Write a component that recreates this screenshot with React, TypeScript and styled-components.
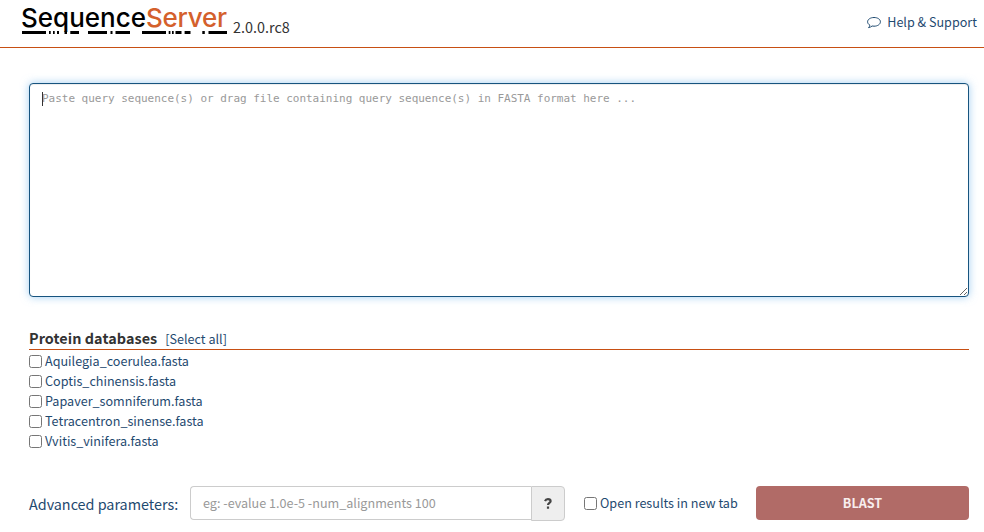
import React from "react";
import styled, { createGlobalStyle } from "styled-components";

const sans = `"Noto Sans CJK SC", "Open Sans", sans-serif`;

const GlobalStyle = createGlobalStyle`
  *, *::before, *::after { box-sizing: border-box; }
  body {
    margin: 0;
    background: #fff;
    color: #333;
    font-family: ${sans};
    overflow: hidden;
  }
`;

const Header = styled.header`
  display: flex;
  justify-content: space-between;
  height: 48px;
  padding: 0 7px 0 22px;
  border-bottom: 1px solid #c74f13;
`;

const Brand = styled.div`
  display: flex;
  gap: 6px;
`;

const Logo = styled.svg`
  display: block;
  width: 205px;
  height: 36px;
  overflow: visible;
  font: 500 26px Inter, sans-serif;
`;

const Version = styled.span`
  margin-top: 16px;
  font-size: 14.4px;
  line-height: 22px;
  white-space: nowrap;
`;

const HelpLink = styled.a`
  display: flex;
  align-items: center;
  gap: 6px;
  height: 22px;
  margin-top: 11px;
  color: #1f4a70;
  font-size: 12.6px;
  line-height: 22px;
  white-space: nowrap;
`;

const Form = styled.form`
  padding: 35px 15px 0 29px;
`;

const QueryBox = styled.div`
  position: relative;
`;

const Caret = styled.span`
  position: absolute;
  top: 9px;
  left: 13px;
  width: 1px;
  height: 14px;
  background: #333;
`;

const QueryInput = styled.textarea`
  display: block;
  width: 940px;
  height: 214px;
  padding: 6px 12px;
  border: 1px solid #17547f;
  border-radius: 4px;
  outline: 0;
  box-shadow: inset 0 1px 1px rgba(0, 0, 0, 0.075), 0 0 8px rgba(102, 175, 233, 0.6);
  color: #333;
  caret-color: transparent;
  font: 11px/17px "DejaVu Sans Mono", monospace;
  letter-spacing: -0.022px;
  resize: vertical;
  &::placeholder { color: #999; opacity: 1; }
`;

const Databases = styled.section`
  margin-top: 31px;
`;

const DatabasesHeader = styled.div`
  display: flex;
  align-items: flex-start;
  gap: 8px;
  height: 22px;
  border-bottom: 1px solid #c74f13;
`;

const Heading = styled.h4`
  margin: 0;
  font-size: 14.4px;
  font-weight: 700;
  letter-spacing: 0.06px;
  line-height: 20px;
  white-space: nowrap;
`;

const SelectAll = styled.button`
  padding: 0;
  border: 0;
  background: none;
  color: #1f4a70;
  font: 12.6px/21px ${sans};
  white-space: nowrap;
`;

const DatabaseList = styled.div`
  display: flex;
  flex-direction: column;
  padding-top: 1px;
`;

const CheckLabel = styled.label`
  display: flex;
  align-items: center;
  gap: 3px;
  height: 20px;
  color: #1f4a70;
  font-size: 12.6px;
  line-height: 20px;
  white-space: nowrap;
`;

const Checkbox = styled.input`
  width: 13px;
  height: 13px;
  margin: 0;
`;

const Controls = styled.div`
  display: flex;
  align-items: flex-start;
  height: 36px;
  margin-top: 35px;
`;

const ParamsLabel = styled.label`
  width: 161px;
  padding-top: 7px;
  color: #1f4a70;
  font-size: 14.4px;
  letter-spacing: -0.02px;
  line-height: 22px;
  white-space: nowrap;
`;

const ParamsGroup = styled.div`
  display: flex;
  width: 375px;
  margin-right: 19px;
`;

const ParamsInput = styled.input`
  width: 341px;
  height: 34px;
  padding: 5px 12px 7px;
  border: 1px solid #ccc;
  border-right: 0;
  border-radius: 4px 0 0 4px;
  font: 12.6px/20px ${sans};
  &::placeholder { color: #999; opacity: 1; }
`;

const HelpButton = styled.button`
  width: 34px;
  height: 35px;
  padding: 0;
  border: 1px solid #ccc;
  border-radius: 0 4px 4px 0;
  background: #eee;
  display: grid;
  place-items: center;
`;

const NewTab = styled.div`
  width: 172px;
  padding-top: 7px;
`;

const SubmitButton = styled.button`
  width: 213px;
  height: 34px;
  padding: 0;
  border: 0;
  border-radius: 4px;
  background: #b16b67;
  color: #f8eeee;
  font: 700 12.6px/20px ${sans};
`;

const databases = [
  "Aquilegia_coerulea.fasta",
  "Coptis_chinensis.fasta",
  "Papaver_somniferum.fasta",
  "Tetracentron_sinense.fasta",
  "Vvitis_vinifera.fasta",
];

export default function App() {
  return (
    <>
      <GlobalStyle />
      <Header>
        <Brand>
          <Logo viewBox="0 0 205 36">
            <text x="-1" y="26.700" textLength="125" fill="#000">Sequence</text>
            <text x="124" y="26.700" textLength="81" fill="#d4602c">Server</text>
            <path
              d="M0 32.500H24M27 32.500h1.700M31 32.500h1.700M35 32.500h2M42.500 32.500h2.500M48.300 32.500H57M66 32.500H85M88.500 32.500h2M93.500 32.500H108M120 32.500H144M146.700 32.500h1.700M150 32.500h1.700M153.500 32.500H159.500M162.600 32.500H168.500M180.300 32.500h2.500M186.500 32.500H205"
              stroke="#000"
              strokeWidth="3"
            />
          </Logo>
          <Version>2.0.0.rc8</Version>
        </Brand>
        <HelpLink>
          <svg width="14" height="13" viewBox="0 0 14 13" fill="none" stroke="#1f4a70">
            <path d="M7 1.500C3.400 1.500.600 3.400.600 5.800c0 1.400.900 2.600 2.300 3.400-.200 1-.700 1.800-1.400 2.400 1.500-.200 2.700-.800 3.600-1.600.600.100 1.200.200 1.900.200 3.600 0 6.400-1.900 6.400-4.400S10.600 1.500 7 1.500Z" />
          </svg>
          Help &amp; Support
        </HelpLink>
      </Header>
      <Form>
        <QueryBox>
          <QueryInput
            autoFocus
            spellCheck={false}
            placeholder="Paste query sequence(s) or drag file containing query sequence(s) in FASTA format here ..."
          />
          <Caret />
        </QueryBox>
        <Databases>
          <DatabasesHeader>
            <Heading>Protein databases</Heading>
            <SelectAll type="button">[Select all]</SelectAll>
          </DatabasesHeader>
          <DatabaseList>
            {databases.map((name) => (
              <CheckLabel key={name}>
                <Checkbox type="checkbox" />
                {name}
              </CheckLabel>
            ))}
          </DatabaseList>
        </Databases>
        <Controls>
          <ParamsLabel>Advanced parameters:</ParamsLabel>
          <ParamsGroup>
            <ParamsInput placeholder="eg: -evalue 1.0e-5 -num_alignments 100" />
            <HelpButton type="button" aria-label="Parameter help">
              <svg width="8" height="11" viewBox="0 0 8 11" fill="none" stroke="#444" strokeWidth="2.200">
                <path d="M1 3.200C1.500 1.700 2.500 1.200 3.900 1.200c1.600 0 2.700.800 2.700 2 0 1.700-2.600 1.700-2.600 3.800M4 8.500v2.200" />
              </svg>
            </HelpButton>
          </ParamsGroup>
          <NewTab>
            <CheckLabel>
              <Checkbox type="checkbox" />
              Open results in new tab
            </CheckLabel>
          </NewTab>
          <SubmitButton type="button">BLAST</SubmitButton>
        </Controls>
      </Form>
    </>
  );
}
